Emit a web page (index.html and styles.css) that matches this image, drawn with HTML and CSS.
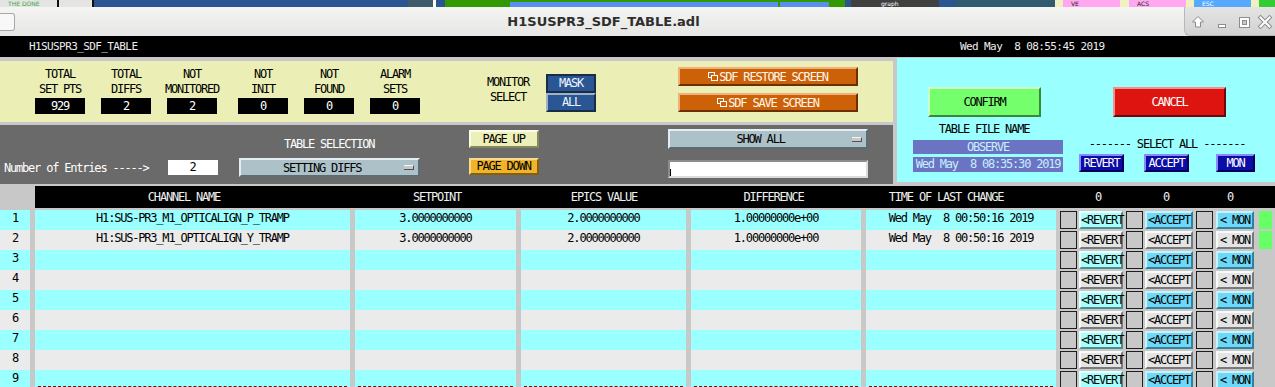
FILE: index.html
```html
<!DOCTYPE html>
<html lang="en">
<head>
    <meta charset="UTF-8">
    <title>H1SUSPR3_SDF_TABLE.adl</title>
    <link rel="stylesheet" href="styles.css">
</head>
<body>
    <!-- desktop panel strip behind the window -->
    <div class="taskbar">
        <div class="seg lite"><span>THE DONE</span></div>
        <div class="seg lines"></div>
        <div class="seg navy" style="width:314px"></div>
        <div class="seg slate" style="width:25px"></div>
        <div class="seg white" style="width:3px"></div>
        <div class="seg navy" style="width:9px"></div>
        <div class="seg green" style="width:65px"></div>
        <div class="seg sky" style="width:268px"></div>
        <div class="seg green" style="width:2px"></div>
        <div class="seg sky" style="width:49px"></div>
        <div class="seg green" style="width:16px"></div>
        <div class="seg navy" style="width:6px"></div>
        <div class="seg dark" style="width:88px"><span>graph</span></div>
        <div class="seg navy" style="width:16px"></div>
        <div class="seg teal" style="width:100px"></div>
        <div class="seg cream" style="width:8px"></div>
        <div class="seg pink" style="width:57px"><span>VE</span></div>
        <div class="seg cream" style="width:9px"></div>
        <div class="seg pink" style="width:57px"><span>ACS</span></div>
        <div class="seg cream" style="width:8px"></div>
        <div class="seg blue" style="width:57px"><span>ESC</span></div>
        <div class="seg cream" style="width:8px"></div>
        <div class="seg lime" style="width:16px"></div>
    </div>

    <!-- window title bar -->
    <div class="titlebar">
        <div class="wm-stub"></div>
        <div class="wm-title">H1SUSPR3_SDF_TABLE.adl</div>
        <div class="wm-buttons">
            <svg width="91" height="29" viewBox="0 0 91 29">
                <path d="M13 9.5 L18.5 15 H15.5 V20 H10.5 V15 H7.5 Z" fill="#fff" stroke="#8c8c8c" stroke-width="1"/>
                <rect x="33.5" y="17.5" width="7" height="3" fill="#fff" stroke="#8c8c8c"/>
                <rect x="54.5" y="10.5" width="10" height="10" fill="#fff" stroke="#8c8c8c"/>
                <rect x="57.5" y="13.5" width="4" height="4" fill="#c8c8c8" stroke="#8c8c8c"/>
                <path d="M75.5 10.5 L84.5 19.5 M84.5 10.5 L75.5 19.5" stroke="#8c8c8c" stroke-width="4" stroke-linecap="square"/>
                <path d="M75.5 10.5 L84.5 19.5 M84.5 10.5 L75.5 19.5" stroke="#fff" stroke-width="2" stroke-linecap="square"/>
            </svg>
        </div>
    </div>

    <!-- screen name and clock -->
    <div class="topbar">
        <span class="screen-name">H1SUSPR3_SDF_TABLE</span>
        <span class="clock">Wed May  8 08:55:45 2019</span>
    </div>

    <div class="upper">
        <div class="left">
            <!-- counters, monitor select, sdf screens -->
            <div class="summary">
                <div class="stats">
                    <div class="stat"><span>TOTAL</span><span>SET PTS</span><b class="val">929</b></div>
                    <div class="stat"><span>TOTAL</span><span>DIFFS</span><b class="val">2</b></div>
                    <div class="stat wide"><span>NOT</span><span>MONITORED</span><b class="val">2</b></div>
                    <div class="stat"><span>NOT</span><span>INIT</span><b class="val">0</b></div>
                    <div class="stat"><span>NOT</span><span>FOUND</span><b class="val">0</b></div>
                    <div class="stat last"><span>ALARM</span><span>SETS</span><b class="val">0</b></div>
                </div>
                <div class="monitor-label">MONITOR<br>SELECT</div>
                <div class="choice">
                    <div class="choice-btn on">MASK</div>
                    <div class="choice-btn">ALL</div>
                </div>
                <div class="sdf">
                    <div class="sdf-btn"><svg class="win-icon" width="10" height="9" viewBox="0 0 10 9"><rect x="0.5" y="0.5" width="6" height="5" fill="none" stroke="#fff"/><rect x="3.5" y="3.5" width="6" height="5" fill="#cc6108" stroke="#fff"/></svg>SDF RESTORE SCREEN</div>
                    <div class="sdf-btn"><svg class="win-icon" width="10" height="9" viewBox="0 0 10 9"><rect x="0.5" y="0.5" width="6" height="5" fill="none" stroke="#fff"/><rect x="3.5" y="3.5" width="6" height="5" fill="#cc6108" stroke="#fff"/></svg>SDF SAVE SCREEN</div>
                </div>
            </div>

            <!-- table selection -->
            <div class="select-bar">
                <div class="entries">
                    <span>Number of Entries -----&gt;</span>
                    <span class="count">2</span>
                </div>
                <div class="tsel">
                    <div class="tsel-title">TABLE SELECTION</div>
                    <div class="menu"><span class="menu-text">SETTING DIFFS</span><span class="menu-mark"></span></div>
                </div>
                <div class="pages">
                    <div class="page-btn up">PAGE UP</div>
                    <div class="page-btn down">PAGE DOWN</div>
                </div>
                <div class="filter">
                    <div class="menu tall"><span class="menu-text">SHOW ALL</span><span class="menu-mark"></span></div>
                    <div class="textbox"><span class="caret"></span></div>
                </div>
            </div>
        </div>

        <!-- confirm / cancel panel -->
        <div class="actions">
            <div class="file">
                <div class="big-btn confirm">CONFIRM</div>
                <div class="file-label">TABLE FILE NAME</div>
                <div class="file-box">OBSERVE</div>
                <div class="file-box stamp">Wed May  8 08:35:30 2019</div>
            </div>
            <div class="sel">
                <div class="big-btn cancel">CANCEL</div>
                <div class="sel-label">------- SELECT ALL -------</div>
                <div class="sel-btns">
                    <div class="all-btn">REVERT</div>
                    <div class="all-btn accept">ACCEPT</div>
                    <div class="all-btn mon">MON</div>
                </div>
            </div>
        </div>
    </div>

    <!-- channel table -->
    <div class="thead">
        <div class="th ch">CHANNEL NAME</div>
        <div class="th sp">SETPOINT</div>
        <div class="th ev">EPICS VALUE</div>
        <div class="th">DIFFERENCE</div>
        <div class="th tm">TIME OF LAST CHANGE</div>
        <div class="th counts"><span>0</span><span>0</span><span>0</span></div>
    </div>

    <div class="rows">
        <div class="row cyan">
            <div class="cell">1</div>
            <div class="cell">H1:SUS-PR3_M1_OPTICALIGN_P_TRAMP</div>
            <div class="cell">3.0000000000</div>
            <div class="cell">2.0000000000</div>
            <div class="cell">1.00000000e+00</div>
            <div class="cell">Wed May  8 00:50:16 2019</div>
            <div class="ctrl"><span class="box"></span><span class="btn revert">&lt;REVERT</span><span class="box"></span><span class="btn accept">&lt;ACCEPT</span><span class="box"></span><span class="btn mon">&lt; MON</span><span class="led"></span></div>
        </div>
        <div class="row grey">
            <div class="cell">2</div>
            <div class="cell">H1:SUS-PR3_M1_OPTICALIGN_Y_TRAMP</div>
            <div class="cell">3.0000000000</div>
            <div class="cell">2.0000000000</div>
            <div class="cell">1.00000000e+00</div>
            <div class="cell">Wed May  8 00:50:16 2019</div>
            <div class="ctrl"><span class="box"></span><span class="btn revert">&lt;REVERT</span><span class="box"></span><span class="btn accept">&lt;ACCEPT</span><span class="box"></span><span class="btn mon">&lt; MON</span><span class="led"></span></div>
        </div>
        <div class="row cyan">
            <div class="cell">3</div><div class="cell"></div><div class="cell"></div><div class="cell"></div><div class="cell"></div><div class="cell"></div>
            <div class="ctrl"><span class="box"></span><span class="btn revert">&lt;REVERT</span><span class="box"></span><span class="btn accept">&lt;ACCEPT</span><span class="box"></span><span class="btn mon">&lt; MON</span></div>
        </div>
        <div class="row grey">
            <div class="cell">4</div><div class="cell"></div><div class="cell"></div><div class="cell"></div><div class="cell"></div><div class="cell"></div>
            <div class="ctrl"><span class="box"></span><span class="btn revert">&lt;REVERT</span><span class="box"></span><span class="btn accept">&lt;ACCEPT</span><span class="box"></span><span class="btn mon">&lt; MON</span></div>
        </div>
        <div class="row cyan">
            <div class="cell">5</div><div class="cell"></div><div class="cell"></div><div class="cell"></div><div class="cell"></div><div class="cell"></div>
            <div class="ctrl"><span class="box"></span><span class="btn revert">&lt;REVERT</span><span class="box"></span><span class="btn accept">&lt;ACCEPT</span><span class="box"></span><span class="btn mon">&lt; MON</span></div>
        </div>
        <div class="row grey">
            <div class="cell">6</div><div class="cell"></div><div class="cell"></div><div class="cell"></div><div class="cell"></div><div class="cell"></div>
            <div class="ctrl"><span class="box"></span><span class="btn revert">&lt;REVERT</span><span class="box"></span><span class="btn accept">&lt;ACCEPT</span><span class="box"></span><span class="btn mon">&lt; MON</span></div>
        </div>
        <div class="row cyan">
            <div class="cell">7</div><div class="cell"></div><div class="cell"></div><div class="cell"></div><div class="cell"></div><div class="cell"></div>
            <div class="ctrl"><span class="box"></span><span class="btn revert">&lt;REVERT</span><span class="box"></span><span class="btn accept">&lt;ACCEPT</span><span class="box"></span><span class="btn mon">&lt; MON</span></div>
        </div>
        <div class="row grey">
            <div class="cell">8</div><div class="cell"></div><div class="cell"></div><div class="cell"></div><div class="cell"></div><div class="cell"></div>
            <div class="ctrl"><span class="box"></span><span class="btn revert">&lt;REVERT</span><span class="box"></span><span class="btn accept">&lt;ACCEPT</span><span class="box"></span><span class="btn mon">&lt; MON</span></div>
        </div>
        <div class="row cyan cut">
            <div class="cell">9</div><div class="cell"></div><div class="cell"></div><div class="cell"></div><div class="cell"></div><div class="cell"></div>
            <div class="ctrl"><span class="box"></span><span class="btn revert">&lt;REVERT</span><span class="box"></span><span class="btn accept">&lt;ACCEPT</span><span class="box"></span><span class="btn mon">&lt; MON</span></div>
        </div>
    </div>
</body>
</html>
```

FILE: styles.css
```css
/* Basic Reset */
* {
    box-sizing: border-box;
    margin: 0;
    padding: 0;
}

body {
    width: 1275px;
    height: 387px;
    overflow: hidden;
    background: #c8c8c8;
    font-family: "DejaVu Sans Mono", "Liberation Mono", monospace;
    font-size: 12px;
    letter-spacing: -1.2px;
    color: #000;
}

/* Desktop strip */
.taskbar {
    display: flex;
    height: 7px;
    overflow: hidden;
}

.seg {
    height: 7px;
    flex-shrink: 0;
    overflow: hidden;
    font-family: "DejaVu Sans", sans-serif;
    font-size: 6px;
    line-height: 7px;
    letter-spacing: 0;
}

.seg span {
    display: block;
    padding-left: 8px;
}

.lite { width: 57px; background: #e4e4e4; color: #3aa83a; }
.lines { width: 37px; background: #e4e4e4; border-left: 2px solid #111; border-right: 2px solid #111; }
.navy { background: #2b5590; }
.slate { background: #3d5b6b; }
.white { background: #fff; }
.green { background: #339900; }
.sky { background: #5a8ff0; border-top: 2px solid #339900; }
.dark { background: #404040; color: #fff; }
.dark span { padding-left: 30px; }
.teal { background: #2f5a6f; }
.cream { background: #f0f0c0; }
.pink { background: #ffa8f0; color: #222; }
.blue { background: #55aaff; color: #fff; }
.lime { background: #33cc33; }

/* Window title bar */
.titlebar {
    display: flex;
    height: 29px;
    background: linear-gradient(#f4f4f2, #e6e6e4);
}

.wm-stub {
    width: 15px;
    height: 18px;
    margin-top: 6px;
    background: #f8f8f8;
    border: 1px solid #a8a8a8;
    border-left: none;
    border-radius: 0 3px 3px 0;
}

.wm-title {
    flex: 1;
    text-align: center;
    padding-left: 8px;
    font-family: "DejaVu Sans", sans-serif;
    font-weight: bold;
    font-size: 13px;
    letter-spacing: 0;
    line-height: 29px;
    color: #2e2e2e;
}

.wm-buttons {
    width: 91px;
    height: 29px;
    background: linear-gradient(#e4e4e4, #d2d2d2);
    border-left: 1px solid #b8b8b8;
    border-bottom: 1px solid #b8b8b8;
    border-bottom-left-radius: 6px;
}

.wm-buttons svg {
    display: block;
}

/* Screen header */
.topbar {
    display: flex;
    height: 21px;
    background: #000;
    color: #eee;
    line-height: 21px;
    font-size: 11px;
    letter-spacing: -0.6px;
    white-space: pre;
}

.screen-name {
    padding-left: 29px;
    width: 960px;
}

/* Upper controls */
.upper {
    display: flex;
    height: 127px;
}

.left {
    width: 893px;
    padding-top: 4px;
}

.summary {
    display: flex;
    align-items: flex-start;
    height: 61px;
    background: #ebefb5;
}

.stats {
    display: flex;
    padding: 6px 0 0 35px;
}

.stat {
    width: 50px;
    margin-right: 16px;
    display: flex;
    flex-direction: column;
    align-items: center;
}

.stat.wide { margin-right: 21px; }
.stat.last { margin-right: 0; }

.stat span {
    line-height: 15px;
    white-space: nowrap;
}

.val {
    width: 50px;
    height: 16px;
    margin-top: 1px;
    background: #000;
    color: #fff;
    font-weight: normal;
    text-align: center;
    line-height: 16px;
}

.monitor-label {
    width: 48px;
    margin: 14px 0 0 64px;
    line-height: 15px;
    text-align: center;
}

.choice {
    width: 50px;
    margin: 13px 0 0 14px;
}

.choice-btn {
    height: 19px;
    background: #2b5694;
    color: #eef4ff;
    text-align: center;
    line-height: 15px;
    border: 2px solid;
    border-color: #9fb3c8 #1b2d46 #1b2d46 #9fb3c8;
}

.choice-btn.on {
    border-color: #1b2d46;
}

.sdf {
    width: 180px;
    margin: 6px 0 0 82px;
}

.sdf-btn {
    display: flex;
    justify-content: center;
    align-items: center;
    height: 19px;
    margin-bottom: 7px;
    background: #cc6108;
    color: #fff8ee;
    border: 2px solid;
    border-color: #f0b07c #6c3000 #6c3000 #f0b07c;
}

.win-icon {
    margin-right: 1px;
}

/* Table selection bar */
.select-bar {
    display: flex;
    align-items: flex-start;
    height: 59px;
    margin-top: 3px;
    background: #6a6a6a;
    color: #fff;
}

.entries {
    display: flex;
    align-items: center;
    margin-top: 35px;
    padding-left: 4px;
    white-space: nowrap;
}

.count {
    width: 50px;
    height: 15px;
    margin-left: 19px;
    background: #fff;
    color: #000;
    text-align: center;
    line-height: 15px;
}

.tsel {
    width: 181px;
    margin-left: 21px;
}

.tsel-title {
    margin-top: 12px;
    line-height: 15px;
    text-align: center;
}

.menu {
    display: flex;
    align-items: center;
    height: 19px;
    margin-top: 6px;
    background: #adc2c8;
    color: #000;
    border: 2px solid;
    border-color: #e4eef2 #5c6c72 #5c6c72 #e4eef2;
}

.menu.tall {
    height: 20px;
    margin-top: 4px;
}

.menu-text {
    flex: 1;
    text-align: center;
}

.menu-mark {
    width: 10px;
    height: 5px;
    margin-right: 4px;
    background: #c8c8c8;
    border-top: 1px solid #f4f4f4;
    border-bottom: 1px solid #505050;
    border-right: 1px solid #505050;
}

.pages {
    width: 70px;
    margin-left: 49px;
}

.page-btn {
    height: 18px;
    margin-top: 5px;
    color: #000;
    text-align: center;
    line-height: 14px;
    border: 2px solid;
}

.page-btn.up {
    background: #ecf0b8;
    border-color: #fbfde6 #85875c #85875c #fbfde6;
}

.page-btn.down {
    height: 17px;
    margin-top: 10px;
    line-height: 13px;
    background: #f0b428;
    border-color: #fad98c #84600e #84600e #fad98c;
}

.filter {
    width: 200px;
    margin-left: 129px;
}

.textbox {
    height: 18px;
    margin-top: 11px;
    background: #fff;
    border: 2px solid;
    border-color: #8c8c8c #dcdcdc #dcdcdc #8c8c8c;
}

.caret {
    display: block;
    width: 1px;
    height: 7px;
    margin-top: 7px;
    background: #000;
}

/* Confirm / cancel panel */
.actions {
    display: flex;
    width: 378px;
    height: 124px;
    margin: 1px 0 0 4px;
    padding: 29px 0 0 16px;
    background: #99ffff;
}

.file {
    width: 150px;
}

.big-btn {
    width: 113px;
    height: 30px;
    text-align: center;
    line-height: 26px;
    border: 2px solid;
}

.confirm {
    margin-left: 15px;
    background: #74ff6c;
    border-color: #cbffc6 #3a8a34 #3a8a34 #cbffc6;
}

.cancel {
    margin-left: 34px;
    background: #dd1410;
    color: #fff;
    border-color: #f4908c #6c0806 #6c0806 #f4908c;
}

.file-label {
    margin-top: 5px;
    padding-right: 8px;
    line-height: 14px;
    text-align: center;
}

.file-box {
    height: 14px;
    margin-top: 4px;
    background: #6b74c2;
    color: #c8eeff;
    text-align: center;
    line-height: 14px;
    white-space: pre;
}

.file-box.stamp {
    height: 15px;
    margin-top: 3px;
    line-height: 15px;
}

.sel {
    width: 176px;
    margin-left: 16px;
}

.sel-label {
    margin-top: 20px;
    line-height: 14px;
    text-align: center;
    white-space: pre;
}

.sel-btns {
    display: flex;
    margin-top: 3px;
}

.all-btn {
    width: 45px;
    height: 18px;
    background: #0c0ca6;
    color: #fff;
    text-align: center;
    line-height: 14px;
    border: 2px solid;
    border-color: #8a8aff #00005a #00005a #8a8aff;
}

.all-btn.accept { margin-left: 20px; }
.all-btn.mon { width: 39px; margin-left: 27px; }

/* Channel table */
.thead {
    display: grid;
    grid-template-columns: 315px 166px 170px 175px 195px 1fr;
    height: 22px;
    margin: 2px 0 0 35px;
    background: #000;
    color: #f0f0f0;
    line-height: 22px;
}

.th {
    text-align: center;
}

.th.ch { padding-right: 17px; }
.th.sp { padding-left: 8px; }
.th.ev { padding-left: 6px; }
.th.tm { padding-right: 25px; }

.th.counts {
    display: flex;
}

.counts span:nth-child(1) { width: 84px; }
.counts span:nth-child(2) { width: 52px; }
.counts span:nth-child(3) { width: 76px; }

.rows {
    margin-top: 2px;
}

.row {
    display: grid;
    grid-template-columns: 30px 315px 161px 165px 170px 190px 1fr;
    column-gap: 5px;
    height: 20px;
}

.cell {
    position: relative;
    text-align: center;
    line-height: 17px;
    white-space: pre;
}

.row.cyan .cell { background: #99ffff; }
.row.grey .cell { background: #ebebeb; }

.row.cut .cell:not(:first-child)::after {
    content: "";
    position: absolute;
    left: 3px;
    right: 3px;
    top: 16px;
    border-top: 1px dashed #8b0000;
}

.ctrl {
    display: flex;
    align-items: center;
    margin-left: -1px;
}

.box {
    width: 17px;
    height: 18px;
    background: #c8c8c8;
    border: 1px solid #1e1e1e;
}

.btn {
    height: 18px;
    margin-left: 2px;
    text-align: center;
    line-height: 14px;
    white-space: pre;
    border: 2px solid;
    border-color: #fafafa #7a7a7a #7a7a7a #fafafa;
    background: #e4e4e4;
}

.btn.revert { width: 44px; margin-right: 3px; }
.btn.accept { width: 48px; margin-right: 3px; }
.btn.mon { width: 38px; margin-left: 3px; }

.row.cyan .btn.revert {
    background: #a6ffff;
    border-color: #e6ffff #4e8c8c #4e8c8c #e6ffff;
}

.row.cyan .btn.accept,
.row.cyan .btn.mon {
    background: #6cd9f8;
    border-color: #c4f2ff #34809a #34809a #c4f2ff;
}

.led {
    width: 13px;
    height: 18px;
    margin-left: 5px;
    background: #66ff66;
}
```
